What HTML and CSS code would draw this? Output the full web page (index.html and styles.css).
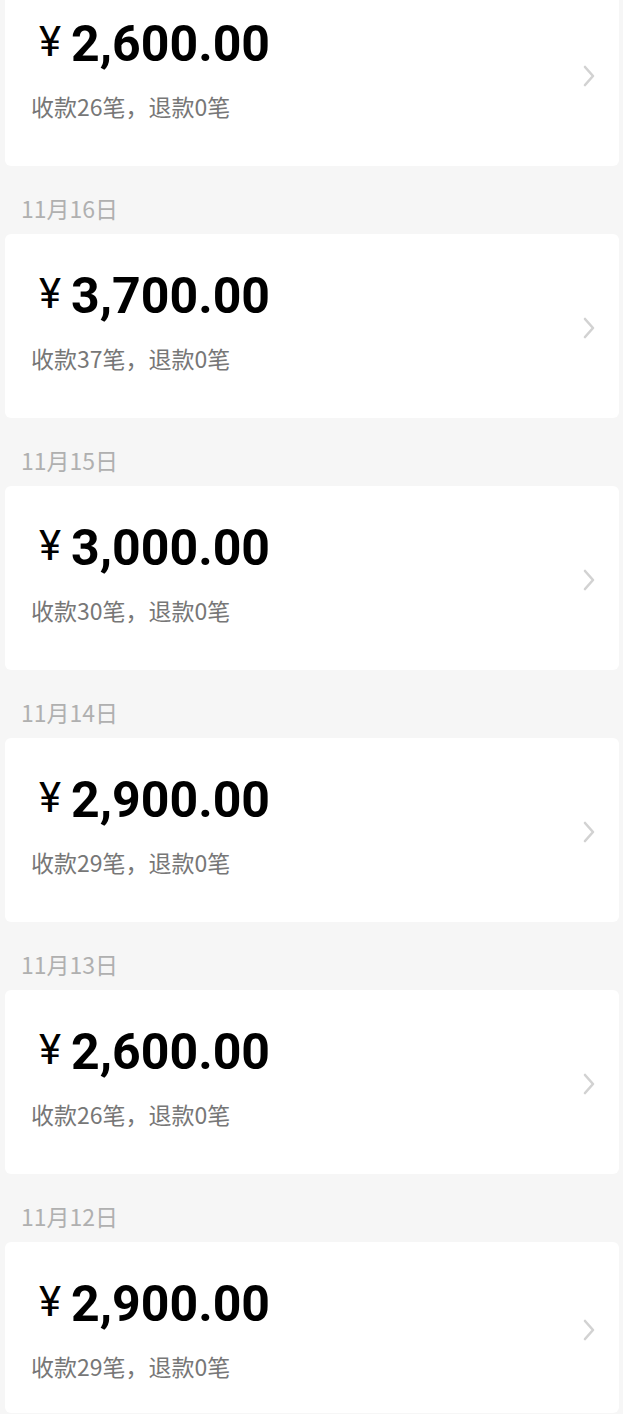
FILE: index.html
```html
<html>
    <head>
        <title>收款记录</title>
        <meta name="viewport" content="width=device-width, initial-scale=1">
        <link rel="stylesheet" href="styles.css">
    </head>
    <body>
        <main class="list">
            <section class="day first">
                <a class="card" href="#">
                    <div class="info">
                        <div class="amount"><span class="yen">¥</span>2,600.00</div>
                        <div class="count">收款26笔，退款0笔</div>
                    </div>
                    <svg class="chevron" width="14" height="24" viewBox="0 0 14 24"><path d="M3 3 L11 12 L3 21" /></svg>
                </a>
            </section>
            <section class="day">
                <h3 class="date">11月16日</h3>
                <a class="card" href="#">
                    <div class="info">
                        <div class="amount"><span class="yen">¥</span>3,700.00</div>
                        <div class="count">收款37笔，退款0笔</div>
                    </div>
                    <svg class="chevron" width="14" height="24" viewBox="0 0 14 24"><path d="M3 3 L11 12 L3 21" /></svg>
                </a>
            </section>
            <section class="day">
                <h3 class="date">11月15日</h3>
                <a class="card" href="#">
                    <div class="info">
                        <div class="amount"><span class="yen">¥</span>3,000.00</div>
                        <div class="count">收款30笔，退款0笔</div>
                    </div>
                    <svg class="chevron" width="14" height="24" viewBox="0 0 14 24"><path d="M3 3 L11 12 L3 21" /></svg>
                </a>
            </section>
            <section class="day">
                <h3 class="date">11月14日</h3>
                <a class="card" href="#">
                    <div class="info">
                        <div class="amount"><span class="yen">¥</span>2,900.00</div>
                        <div class="count">收款29笔，退款0笔</div>
                    </div>
                    <svg class="chevron" width="14" height="24" viewBox="0 0 14 24"><path d="M3 3 L11 12 L3 21" /></svg>
                </a>
            </section>
            <section class="day">
                <h3 class="date">11月13日</h3>
                <a class="card" href="#">
                    <div class="info">
                        <div class="amount"><span class="yen">¥</span>2,600.00</div>
                        <div class="count">收款26笔，退款0笔</div>
                    </div>
                    <svg class="chevron" width="14" height="24" viewBox="0 0 14 24"><path d="M3 3 L11 12 L3 21" /></svg>
                </a>
            </section>
            <section class="day last">
                <h3 class="date">11月12日</h3>
                <a class="card" href="#">
                    <div class="info">
                        <div class="amount"><span class="yen">¥</span>2,900.00</div>
                        <div class="count">收款29笔，退款0笔</div>
                    </div>
                    <svg class="chevron" width="14" height="24" viewBox="0 0 14 24"><path d="M3 3 L11 12 L3 21" /></svg>
                </a>
            </section>
        </main>
    </body>
</html>
```

FILE: styles.css
```css
body {
    margin: 0;
    height: 100vh;
    overflow: hidden;
    background-color: #f6f6f6;
    font-family: "Noto Sans CJK SC", "Noto Sans", sans-serif;
}

.first {
    margin-top: -18px;
}

.date {
    height: 68px;
    margin: 0;
    padding: 0 0 14px 21px;
    box-sizing: border-box;
    display: flex;
    align-items: flex-end;
    font-size: 23px;
    line-height: 24px;
    font-weight: normal;
    color: #b0b0b0;
}

.card {
    display: flex;
    flex-direction: row;
    justify-content: space-between;
    align-items: center;
    height: 184px;
    margin: 0 4px 0 5px;
    padding: 0 23px 0 26px;
    box-sizing: border-box;
    background-color: white;
    border-radius: 6px;
    text-decoration: none;
}

.last .card {
    height: 171px;
}

.info {
    align-self: flex-start;
    padding-top: 35px;
}

.amount {
    margin-left: 8px;
    font-family: Roboto, sans-serif;
    font-size: 50px;
    line-height: 50px;
    font-weight: bold;
    color: #000;
}

.yen {
    margin-right: 10px;
    font-size: 42px;
    font-weight: normal;
    vertical-align: 5px;
}

.count {
    margin-top: 22px;
    font-size: 23px;
    line-height: 30px;
    color: #777;
}

.chevron {
    margin-top: 4px;
}

.chevron path {
    fill: none;
    stroke: #d2d2d2;
    stroke-width: 2.6;
    stroke-linecap: round;
    stroke-linejoin: round;
}
```
